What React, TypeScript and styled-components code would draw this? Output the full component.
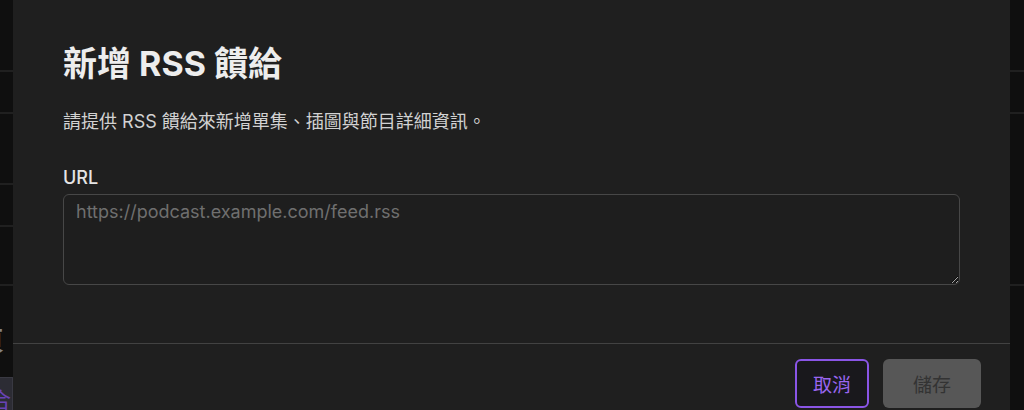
import React from "react";
import styled, { createGlobalStyle } from "styled-components";

const GlobalStyle = createGlobalStyle`
  html, body {
    margin: 0;
    padding: 0;
    background: #121212;
    overflow: hidden;
  }
  body {
    font-family: "Inter", "Noto Sans CJK TC", sans-serif;
  }
`;

const Page = styled.div`
  position: relative;
  width: 1024px;
  height: 410px;
  overflow: hidden;
  display: flex;
  justify-content: space-between;
  background: #121212;
`;

const Column = styled.div<{ $width: number }>`
  width: ${(p) => p.$width}px;
  display: flex;
  flex-direction: column;
  overflow: hidden;
`;

const Row = styled.div<{ $height: number }>`
  height: ${(p) => p.$height}px;
  flex-shrink: 0;
  border-bottom: 2px solid #262626;
  box-sizing: border-box;
`;

const PlainRow = styled.div<{ $height: number }>`
  height: ${(p) => p.$height}px;
  flex-shrink: 0;
  overflow: hidden;
`;

const SideHeading = styled.div`
  margin-left: -22px;
  padding-top: 40px;
  font-size: 26px;
  line-height: 30px;
  font-weight: 700;
  color: #9a9a9a;
`;

const SideChip = styled.div`
  margin-top: 21px;
  height: 40px;
  background: #34343e;
  border: 1px solid #44444e;
  color: #7c4fd6;
  font-size: 22px;
  padding-top: 4px;
  margin-left: -14px;
  padding-left: 2px;
  box-sizing: border-box;
`;

const Backdrop = styled.div`
  position: absolute;
  inset: 0;
  background: rgba(0, 0, 0, 0.15);
`;

const Dialog = styled.div`
  position: absolute;
  left: 13px;
  right: 14px;
  top: -6px;
  background: #1f1f1f;
  color: #ececec;
  display: flex;
  flex-direction: column;
`;

const Body = styled.div`
  padding: 50px 50px 58px;
  display: flex;
  flex-direction: column;
`;

const Title = styled.h2`
  margin: 0;
  font-size: 34px;
  line-height: 40px;
  font-weight: 700;
  color: #ededed;
`;

const Description = styled.p`
  margin: 24px 0 0;
  font-size: 18px;
  line-height: 27px;
  color: #d2d2d2;
`;

const Label = styled.label`
  margin-top: 31px;
  font-size: 18px;
  line-height: 24px;
  font-weight: 500;
  color: #e4e4e4;
`;

const TextArea = styled.textarea`
  margin-top: 4px;
  height: 91px;
  box-sizing: border-box;
  padding: 4px 12px;
  background: #1e1e1e;
  border: 1px solid #474747;
  border-radius: 6px;
  color: #e0e0e0;
  font-family: "Inter", "Noto Sans CJK TC", sans-serif;
  font-size: 18px;
  line-height: 26px;
  color-scheme: dark;
  outline: none;
  resize: vertical;

  &::placeholder {
    color: #6f6f6f;
  }
`;

const Footer = styled.div`
  border-top: 1px solid #424242;
  padding: 15px 29px 20px;
  display: flex;
  justify-content: flex-end;
  gap: 14px;
`;

const Button = styled.button<{ $variant: "outline" | "solid" }>`
  height: 49px;
  box-sizing: border-box;
  border-radius: 6px;
  font-family: "Inter", "Noto Sans CJK TC", sans-serif;
  font-size: 19px;
  font-weight: 400;
  cursor: pointer;
  width: ${(p) => (p.$variant === "outline" ? 74 : 98)}px;
  background: ${(p) => (p.$variant === "outline" ? "#19181c" : "#575757")};
  border: ${(p) => (p.$variant === "outline" ? "2px solid #8a55e6" : "none")};
  color: ${(p) => (p.$variant === "outline" ? "#9a66f0" : "#333333")};
`;

export default function App() {
  return (
    <>
      <GlobalStyle />
      <Page>
        <Column $width={13}>
          <Row $height={72} />
          <Row $height={42} />
          <Row $height={71} />
          <Row $height={42} />
          <Row $height={59} />
          <PlainRow $height={124}>
            <SideHeading>頁</SideHeading>
            <SideChip>合</SideChip>
          </PlainRow>
        </Column>
        <Column $width={14}>
          <Row $height={72} />
          <Row $height={42} />
          <Row $height={172} />
        </Column>
        <Backdrop />
        <Dialog role="dialog" aria-labelledby="rss-title">
          <Body>
            <Title id="rss-title">新增 RSS 饋給</Title>
            <Description>
              請提供 RSS 饋給來新增單集、插圖與節目詳細資訊。
            </Description>
            <Label htmlFor="rss-url">URL</Label>
            <TextArea
              id="rss-url"
              placeholder="https://podcast.example.com/feed.rss"
            />
          </Body>
          <Footer>
            <Button $variant="outline">取消</Button>
            <Button $variant="solid" disabled>
              儲存
            </Button>
          </Footer>
        </Dialog>
      </Page>
    </>
  );
}
